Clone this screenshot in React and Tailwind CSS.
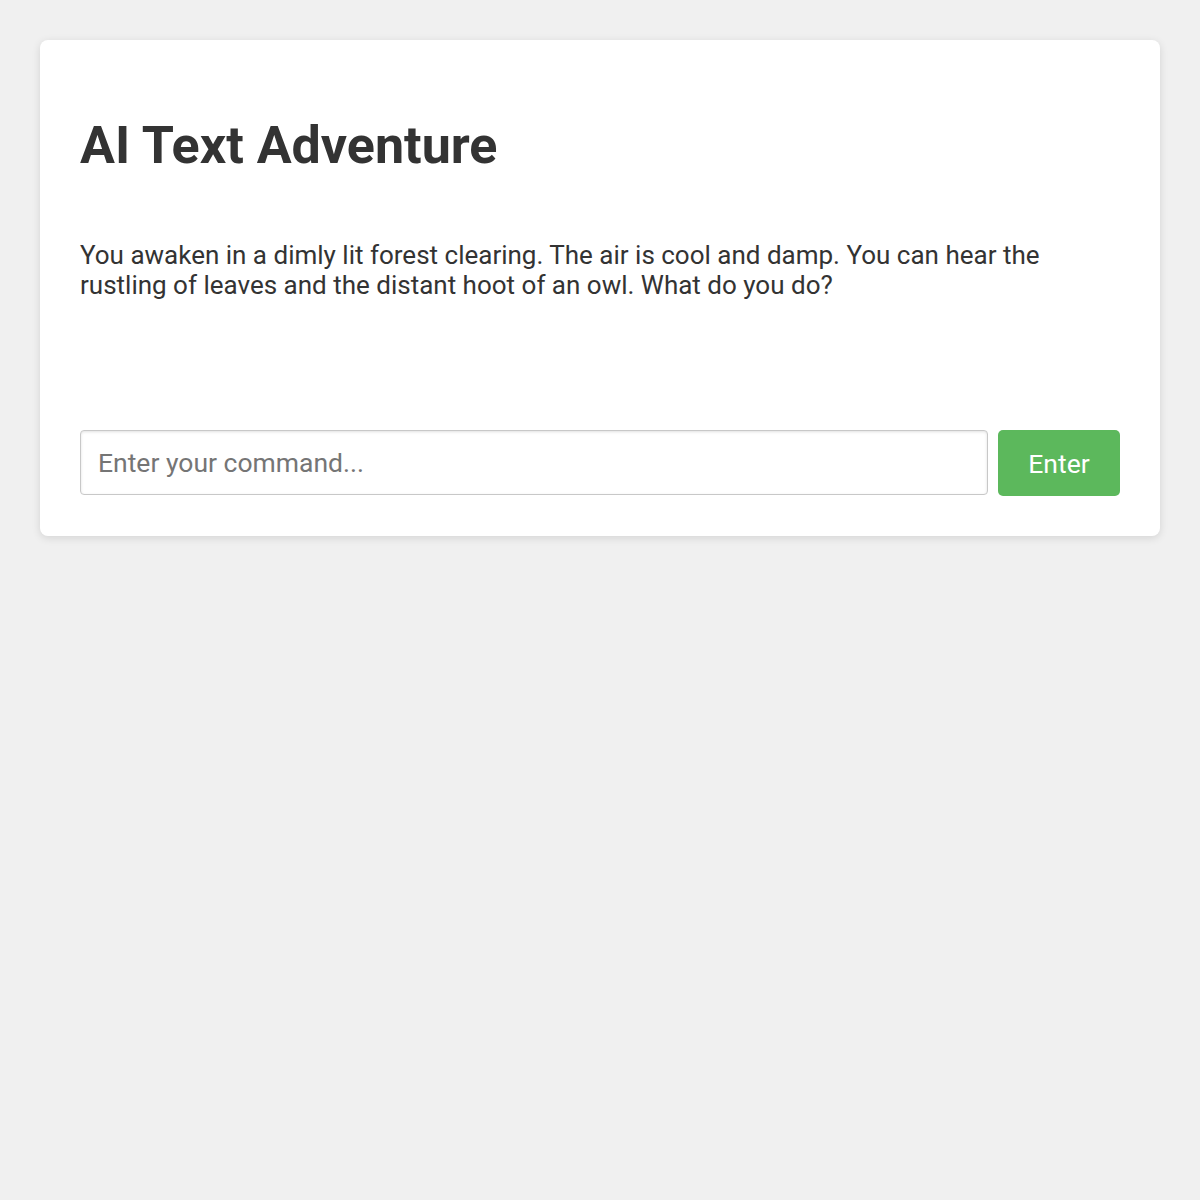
export default function App() {
  return (
    <div className="min-h-screen bg-[#f0f0f0] p-10 font-['Roboto',sans-serif] text-[#333]">
      <div className="rounded-lg bg-white p-10 shadow-[0_2px_8px_rgba(0,0,0,0.12)]">
        <h1 className="mt-[35px] text-[52px] font-bold leading-[1.2]">AI Text Adventure</h1>
        <div className="mt-[63px] min-h-[190px] text-[26px] leading-[30px]">
          <p>
            You awaken in a dimly lit forest clearing. The air is cool and damp. You can hear the
            rustling of leaves and the distant hoot of an owl. What do you do?
          </p>
        </div>
        <form className="flex gap-[10px]" onSubmit={(e) => e.preventDefault()}>
          <input
            type="text"
            placeholder="Enter your command..."
            className="h-[65px] flex-1 rounded-[4px] border border-[#c8c8c8] px-[17px] text-[26.5px] text-[#333] shadow-[inset_0_1px_3px_rgba(0,0,0,0.12)] outline-none placeholder:text-[#757575]"
          />
          <button
            type="submit"
            className="h-[66px] w-[122px] rounded-[5px] bg-[#5cb85c] text-[26.5px] text-white"
          >
            Enter
          </button>
        </form>
      </div>
    </div>
  );
}
